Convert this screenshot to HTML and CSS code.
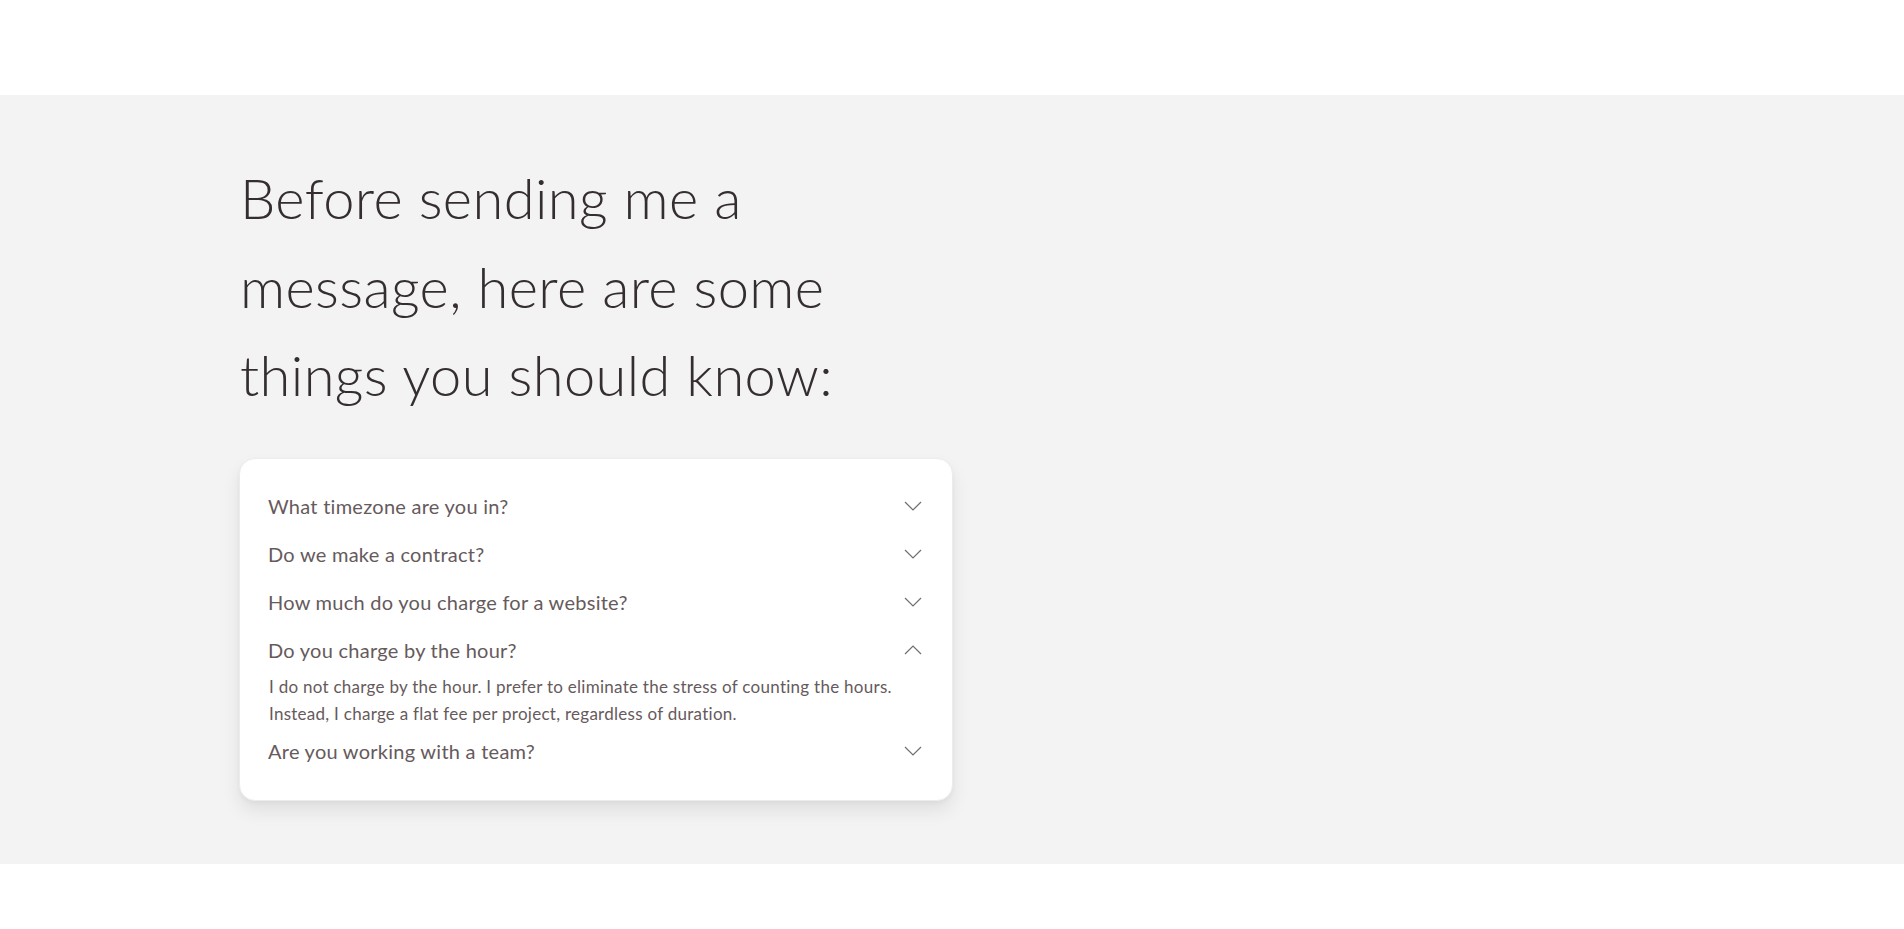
FILE: index.html
```html
<!DOCTYPE html>
<html lang="en">
<head>
<meta charset="utf-8">
<title>FAQ</title>
<link rel="stylesheet" href="styles.css">
</head>
<body>
<div class="topbar"></div>
<section class="faq-section">
  <div class="container">
    <div class="faq-col">
      <h2 class="faq-title">Before sending me a<br>message, here are some<br>things you should know:</h2>
      <div class="faq-card">
        <div class="faq-item">
          <div class="faq-q"><span>What timezone are you in?</span><svg class="chev" viewBox="0 0 18 10" width="18" height="10"><polyline points="1,1 9,9 17,1"/></svg></div>
        </div>
        <div class="faq-item">
          <div class="faq-q"><span>Do we make a contract?</span><svg class="chev" viewBox="0 0 18 10" width="18" height="10"><polyline points="1,1 9,9 17,1"/></svg></div>
        </div>
        <div class="faq-item">
          <div class="faq-q"><span>How much do you charge for a website?</span><svg class="chev" viewBox="0 0 18 10" width="18" height="10"><polyline points="1,1 9,9 17,1"/></svg></div>
        </div>
        <div class="faq-item open">
          <div class="faq-q"><span>Do you charge by the hour?</span><svg class="chev" viewBox="0 0 18 10" width="18" height="10"><polyline points="1,9 9,1 17,9"/></svg></div>
          <p class="faq-a">I do not charge by the hour. I prefer to eliminate the stress of counting the hours. Instead, I charge a flat fee per project, regardless of duration.</p>
        </div>
        <div class="faq-item">
          <div class="faq-q"><span>Are you working with a team?</span><svg class="chev" viewBox="0 0 18 10" width="18" height="10"><polyline points="1,1 9,9 17,1"/></svg></div>
        </div>
      </div>
    </div>
  </div>
</section>
<div class="bottombar"></div>
</body>
</html>
```
FILE: styles.css
```css
* { box-sizing: border-box; }
html, body { margin: 0; padding: 0; }
body {
  background: #ffffff;
  font-family: "Lato", "Liberation Sans", sans-serif;
}
.topbar { height: 95px; background: #fff; }
.bottombar { height: 66px; background: #fff; }
.faq-section {
  background: #f3f3f3;
  padding: 59px 0 63px;
}
.container {
  width: 1426px;
  margin: 0 auto;
  display: grid;
  grid-template-columns: 714px 1fr;
}
.faq-title {
  margin: 0 0 38px;
  font-family: "Lato", sans-serif;
  font-weight: 300;
  font-size: 56px;
  line-height: 88.5px;
  letter-spacing: 0.4px;
  color: #352e30;
  padding-left: 1px;
}
.faq-card {
  background: #fff;
  border: 1px solid #ececec;
  border-radius: 16px;
  padding: 23px 29px 25px 28px;
  box-shadow: 0 10px 18px rgba(0, 0, 0, 0.08), 0 2px 4px rgba(0, 0, 0, 0.04);
}
.faq-q {
  display: flex;
  justify-content: space-between;
  align-items: center;
  padding: 12px 0;
  font-size: 20px;
  line-height: 24px;
  letter-spacing: 0.26px;
  color: #665a5c;
}
.chev {
  fill: none;
  stroke: #6f6f6f;
  stroke-width: 1.2;
  margin-right: 1px;
}
.faq-a {
  margin: -1px 0 0;
  padding-left: 1px;
  font-size: 17px;
  line-height: 27px;
  letter-spacing: 0.27px;
  color: #665a5c;
}
```
